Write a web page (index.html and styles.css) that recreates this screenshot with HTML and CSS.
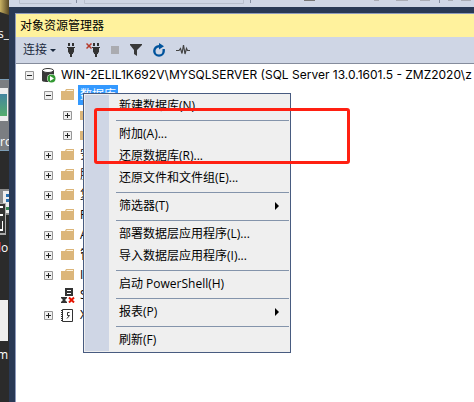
FILE: index.html
```html
<!DOCTYPE html>
<html lang="zh-CN">
<head>
<meta charset="utf-8">
<title>对象资源管理器</title>
<link rel="stylesheet" href="styles.css">
</head>
<body>
<svg width="0" height="0" class="defs" aria-hidden="true">
  <symbol id="plus" viewBox="0 0 9 9"><path fill="#f0f0f0" stroke="#969696" d="M.5.5h8v8h-8z"/><path stroke="#222" d="M2 4.500h5M4.500 2v5"/></symbol>
  <symbol id="minus" viewBox="0 0 9 9"><path fill="#f0f0f0" stroke="#969696" d="M.5.5h8v8h-8z"/><path stroke="#222" d="M2 4.500h5"/></symbol>
  <symbol id="folder" viewBox="0 0 14 12"><path fill="#dcb67a" d="M0 2h4l1-2h8v11H0z"/><path fill="#fff4df" d="M6 1h6v1H5z"/></symbol>
  <symbol id="plug" viewBox="0 0 8 14"><path fill="#333" d="M1 0h2v3H1zM5 0h2v3H5zM0 4h8v1H7v4L6 10v1H5v3H3v-3H2v-1L1 9V5H0z"/></symbol>
</svg>
<div class="screen">
  <aside class="desktop">
    <svg class="wallpaper" width="9" height="402" viewBox="0 0 9 402" aria-hidden="true">
      <defs><linearGradient id="gold" x2="1"><stop stop-color="#c9b263"/><stop offset="1" stop-color="#564724"/></linearGradient>
      <linearGradient id="photo" y2="1" x2="0"><stop stop-color="#4385a0"/><stop offset="1" stop-color="#55ad6c"/></linearGradient></defs>
      <path fill="#2b2b2b" d="M0 0h9v402H0z"/>
      <path fill="url(#gold)" d="M0 0h9v15L0 12z"/>
      <path fill="#7b7e82" d="M0 79h9v71H0z"/><path fill="#7d9eb6" d="M0 79h9v1H0zM0 150h9v1H0z"/>
      <path fill="#eee" d="M0 88h8v33H0z"/><path fill="url(#photo)" d="M0 94h7v22H0z"/>
      <path fill="#8b8b8b" d="M0 189h9v26H0z"/><path fill="#eee" d="M3 191h6v22H3z"/><path fill="#286fae" d="M6 194h3v3H6zM6 199h3v3H6z"/><path fill="#358452" d="M6 207h3v3H6z"/>
      <path fill="#aaa" d="M0 203h6v32H0z"/><path fill="#333" d="M0 204h5v29H0z"/><path fill="#fff" d="M0 206h3v2H0zM0 214h3v2H0zM0 229h3v2H0zM2 221h1v10H2z"/>
      <path fill="#9c3030" d="M0 242h1v10H0z"/>
      <path fill="#eee" d="M0 300h8v41H0z"/>
      <g class="wall-text"><text x="-2" y="38">s_</text><text x="0" y="146">ro</text><text x="1" y="252">o</text><text x="-3" y="359">m</text></g>
    </svg>
  </aside>
  <div class="app">
    <div class="main-bar">
      <svg width="465" height="7" viewBox="9 0 465 7" aria-hidden="true"><path fill="none" stroke="#b8bfcd" d="M19.500 0v3.500h52M84.500 0v3.500h159V0"/><path stroke="#8790a3" d="M76.500 0v3M250.500 0v3M439.500 0v3"/><path fill="#777" d="M304 0h11v1h-11z"/><path fill="#a9acb5" d="M374 0h5v1h-5zM396 0h12v1h-12zM420 0h10v1h-10zM448 0h5v1h-5zM461 0h10v1h-10z"/></svg>
    </div>
    <main class="panel">
      <h1 class="title">对象资源管理器</h1>
      <div class="toolbar">
        <button class="tool connect">连接<svg width="6" height="3" viewBox="0 0 6 3"><path fill="#1b293e" d="M0 0h6L3 3z"/></svg></button>
        <button class="tool" aria-label="连接对象资源管理器"><svg width="8" height="14"><use href="#plug"/></svg></button>
        <button class="tool" aria-label="断开连接"><svg width="14" height="14" viewBox="0 0 14 14"><use href="#plug" x="6" width="8" height="14"/><path stroke="#b53a2b" stroke-width="1.500" d="M.5.500l5 5m0-5l-5 5"/></svg></button>
        <button class="tool" aria-label="停止"><svg width="8" height="8"><path fill="#aaabb0" d="M0 0h8v8H0z"/></svg></button>
        <button class="tool" aria-label="筛选器"><svg width="12" height="12" viewBox="0 0 12 12"><path fill="#383838" d="M0 0h12v1L7 6v6l-3-2V6L0 1z"/></svg></button>
        <button class="tool" aria-label="刷新"><svg width="12" height="14" viewBox="0 0 12 14"><path fill="none" stroke="#00539c" stroke-width="2.400" d="M7.500 3.200H6a4.700 4.700 0 1 0 4.700 4.700V6"/><path fill="#00539c" d="M6 0l5 3.300L6 6.600z"/></svg></button>
        <button class="tool" aria-label="活动监视器"><svg width="14" height="12" viewBox="0 0 14 12"><path fill="none" stroke="#444" stroke-width="1.200" d="M0 6.500h3l1.500-2 1.500 5L7.500 1 9 10l1.500-5.500 1 2H14"/></svg></button>
      </div>
      <div class="explorer">
        <ul class="tree">
          <li class="row"><svg class="toggle"><use href="#minus"/></svg><svg class="icon" viewBox="0 0 14 15"><path fill="#383838" d="M0 2.500v10c0 2 12 2 12 0v-10z"/><ellipse cx="6" cy="2.500" rx="5.500" ry="2" fill="#fff" stroke="#383838"/><circle cx="9.500" cy="10.500" r="4.500" fill="#fff"/><circle cx="9.500" cy="10.500" r="4" fill="#329932"/><path fill="#fff" d="M8 8l4 2.500L8 13z"/></svg><span class="label server">WIN-2ELIL1K692V\MYSQLSERVER (SQL Server 13.0.1601.5 - ZMZ2020\z</span></li>
          <li class="row child"><svg class="toggle"><use href="#minus"/></svg><svg class="icon folder"><use href="#folder"/></svg><span class="label selected">数据库</span></li>
          <li class="row grandchild"><svg class="toggle"><use href="#plus"/></svg><svg class="icon folder"><use href="#folder"/></svg></li>
          <li class="row grandchild"><svg class="toggle"><use href="#plus"/></svg><svg class="icon folder"><use href="#folder"/></svg></li>
          <li class="row child"><svg class="toggle"><use href="#plus"/></svg><svg class="icon folder"><use href="#folder"/></svg><span class="label">安</span></li>
          <li class="row child"><svg class="toggle"><use href="#plus"/></svg><svg class="icon folder"><use href="#folder"/></svg><span class="label">服</span></li>
          <li class="row child"><svg class="toggle"><use href="#plus"/></svg><svg class="icon folder"><use href="#folder"/></svg><span class="label">复</span></li>
          <li class="row child"><svg class="toggle"><use href="#plus"/></svg><svg class="icon folder"><use href="#folder"/></svg><span class="label">P</span></li>
          <li class="row child"><svg class="toggle"><use href="#plus"/></svg><svg class="icon folder"><use href="#folder"/></svg><span class="label">A</span></li>
          <li class="row child"><svg class="toggle"><use href="#plus"/></svg><svg class="icon folder"><use href="#folder"/></svg><span class="label">管</span></li>
          <li class="row child"><svg class="toggle"><use href="#plus"/></svg><svg class="icon folder"><use href="#folder"/></svg><span class="label">I</span></li>
          <li class="row child"><span class="toggle"></span><svg class="icon" viewBox="0 0 14 15"><path fill="#333" d="M4 0h8v8H4zM2 9h4v1H2z"/><path stroke="#fff" d="M6 2.500h4M6 5.500h4"/><path fill="#333" d="M0 9h6v1L4 12l2 2v1H0v-1l2-2-2-2z"/><path stroke="#e51400" stroke-width="2" d="M8 9.500l5 5m0-5l-5 5"/></svg><span class="label">S</span></li>
          <li class="row child"><svg class="toggle"><use href="#plus"/></svg><svg class="icon" viewBox="0 0 14 15"><path fill="#fff" stroke="#333" d="M1.500 1.500h10v12h-10z"/><path stroke="#333" stroke-dasharray="1 1" d="M.5 2v12"/><path fill="none" stroke="#333" d="M8.500 4.500h-2v3h2L6 10.500"/></svg><span class="label">X</span></li>
        </ul>
        <div class="menu" role="menu">
          <button class="item" role="menuitem">新建数据库(N)</button>
          <hr>
          <button class="item" role="menuitem">附加(A)...</button>
          <button class="item" role="menuitem">还原数据库(R)...</button>
          <button class="item" role="menuitem">还原文件和文件组(E)...</button>
          <hr>
          <button class="item" role="menuitem">筛选器(T)<svg width="4" height="8" viewBox="0 0 4 8"><path d="M0 0l4 4-4 4z"/></svg></button>
          <hr>
          <button class="item" role="menuitem">部署数据层应用程序(L)...</button>
          <button class="item" role="menuitem">导入数据层应用程序(I)...</button>
          <hr>
          <button class="item" role="menuitem">启动 PowerShell(H)</button>
          <hr>
          <button class="item" role="menuitem">报表(P)<svg width="4" height="8" viewBox="0 0 4 8"><path d="M0 0l4 4-4 4z"/></svg></button>
          <hr>
          <button class="item" role="menuitem">刷新(F)</button>
        </div>
        <div class="highlight"></div>
      </div>
    </main>
  </div>
</div>
</body>
</html>
```
FILE: styles.css
```css
* { box-sizing: border-box; }
body {
  margin: 0;
  overflow: hidden;
  font: 12px/20px "Open Sans", "Noto Sans CJK SC", sans-serif;
  color: #000;
}
svg { display: block; flex: none; }
.defs { position: absolute; }
.screen { display: flex; min-height: 100vh; background: #293955; }
.desktop { flex: none; width: 9px; overflow: hidden; background: #2b2b2b; }
.wall-text { fill: #fff; font-size: 12px; }
.app { flex: 1; min-width: 0; display: flex; flex-direction: column; }
.main-bar { height: 7px; overflow: hidden; background: #cfd6e5; }
.panel {
  flex: 1;
  display: flex;
  flex-direction: column;
  margin: 6px 0 0 6px;
  border: solid #8e9bbc;
  border-width: 1px 0 0 1px;
}
.title {
  margin: 0;
  padding: 0 4px;
  height: 23px;
  font-size: 12px;
  font-weight: 400;
  line-height: 23px;
  background: #fff29d;
}
.toolbar {
  display: flex;
  align-items: center;
  gap: 11px;
  height: 27px;
  padding: 0 7px;
  background: #cfd6e5;
  border-bottom: 1px solid #858c9c;
}
.tool {
  display: flex;
  align-items: center;
  gap: 3px;
  margin: 0;
  padding: 0;
  border: 0;
  background: none;
  color: #1b293e;
  font: inherit;
}
.explorer { position: relative; flex: 1; background: #fff; }
.tree { margin: 0; padding: 1px 0 0 9px; list-style: none; overflow: hidden; }
.row { display: flex; align-items: center; height: 20px; white-space: nowrap; }
.child { padding-left: 19px; }
.grandchild { padding-left: 38px; }
.toggle { flex: none; width: 9px; height: 9px; margin-right: 8px; }
.icon { width: 14px; height: 15px; margin-right: 3px; }
.folder { height: 12px; }
.label { padding: 0 2px; }
.server { font-family: Inter, sans-serif; }
.selected { background: #39f; color: #fff; }
.menu {
  position: absolute;
  top: 29px;
  left: 67px;
  width: 208px;
  padding: 1px;
  border: 1px solid #485b80;
  background: linear-gradient(to right, #cfd6e5 24px, #efefef 24px) content-box, #efefef;
}
.item {
  display: flex;
  align-items: center;
  justify-content: space-between;
  width: 100%;
  height: 22px;
  margin: 0;
  padding: 0 10px 0 34px;
  border: 0;
  background: none;
  color: #000;
  font: inherit;
  white-space: nowrap;
}
.menu hr { height: 1px; margin: 3px 0 2px 31px; border: 0; background: #8494ab; }
.highlight {
  position: absolute;
  top: 44px;
  left: 78px;
  width: 256px;
  height: 56px;
  border: 3px solid #ff2012;
  border-radius: 3px;
  pointer-events: none;
}
```
